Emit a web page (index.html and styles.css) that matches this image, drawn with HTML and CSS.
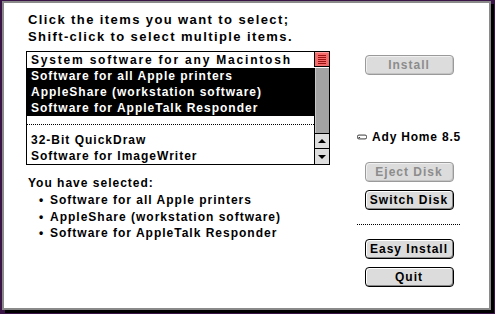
FILE: index.html
```html
<!DOCTYPE html>
<html>
<head>
<meta charset="utf-8">
<link rel="stylesheet" href="styles.css">
</head>
<body>
<div class="window">
  <div class="left">
    <p class="intro">Click the items you want to select;<br>Shift-click to select multiple items.</p>
    <div class="listbox">
      <ul class="items">
        <li>System software for any Macintosh</li>
        <li class="sel">Software for all Apple printers</li>
        <li class="sel">AppleShare (workstation software)</li>
        <li class="sel">Software for AppleTalk Responder</li>
        <li class="sep"></li>
        <li>32-Bit QuickDraw</li>
        <li>Software for ImageWriter</li>
      </ul>
      <div class="scrollbar">
        <div class="thumb">
          <svg width="16" height="16" viewBox="0 0 16 16"><rect x="0.5" y="0.5" width="15" height="15" fill="#f46b6b" stroke="#000"/><rect x="1" y="1" width="14" height="1" fill="#ffa0a0"/><g fill="#9a1010"><rect x="4" y="4" width="8" height="1"/><rect x="4" y="6" width="8" height="1"/><rect x="4" y="8" width="8" height="1"/><rect x="4" y="10" width="8" height="1"/><rect x="4" y="12" width="8" height="1"/></g></svg>
        </div>
        <div class="track"></div>
        <div class="arrow">
          <svg width="16" height="16" viewBox="0 0 16 16"><rect x="0.5" y="0.5" width="15" height="15" fill="#dedede" stroke="#000"/><path d="M4 10 L12 10 L8 6 Z" fill="#000"/></svg>
        </div>
        <div class="arrow">
          <svg width="16" height="16" viewBox="0 0 16 16"><rect x="0.5" y="-0.5" width="15" height="16" fill="#dedede" stroke="#000"/><path d="M4 6 L12 6 L8 10 Z" fill="#000"/></svg>
        </div>
      </div>
    </div>
    <div class="selected">
      <p class="sel-title">You have selected:</p>
      <ul class="bullets">
        <li>Software for all Apple printers</li>
        <li>AppleShare (workstation software)</li>
        <li>Software for AppleTalk Responder</li>
      </ul>
    </div>
  </div>
  <div class="right">
    <button class="btn disabled">Install</button>
    <div class="disk">
      <svg width="13" height="8" viewBox="0 0 13 8"><rect x="0.5" y="1.5" width="12" height="5" rx="2" fill="#fff" stroke="#000"/><rect x="2" y="4" width="2" height="1" fill="#000"/></svg>
      <span>Ady Home 8.5</span>
    </div>
    <button class="btn disabled eject">Eject Disk</button>
    <button class="btn switch">Switch Disk</button>
    <div class="dots"></div>
    <button class="btn easy">Easy Install</button>
    <button class="btn quit">Quit</button>
  </div>
</div>
</body>
</html>
```

FILE: styles.css
```css
html, body {
  margin: 0;
  padding: 0;
}
body {
  width: 495px;
  height: 314px;
  overflow: hidden;
  background: #3a1446;
  font-family: "Liberation Sans", Arial, sans-serif;
  font-weight: bold;
  font-size: 12px;
  letter-spacing: 1px;
  color: #000;
}
.window {
  margin: 1px 0 0 2px;
  width: 485px;
  height: 305px;
  background: #fff;
  border: 2px solid #8a8a8a;
  box-shadow: 3px 3px 0 #000;
  display: flex;
  flex-direction: row;
  gap: 27px;
}
.left {
  width: 304px;
  padding-left: 22px;
  display: flex;
  flex-direction: column;
}
.intro {
  margin: 8px 0 0 2px;
  line-height: 17px;
  font-size: 13px;
  letter-spacing: 1.4px;
  white-space: nowrap;
}
.listbox {
  margin-top: 6px;
  height: 112px;
  border: 1px solid #000;
  display: flex;
}
.items {
  list-style: none;
  margin: 0;
  padding: 0;
  flex: 1;
}
.items li {
  height: 16px;
  line-height: 16px;
  padding-left: 4px;
  white-space: nowrap;
}
.items li:first-child {
  letter-spacing: 1.8px;
}
.items li.sel {
  background: #000;
  color: #fff;
}
.items li.sep {
  position: relative;
}
.items li.sep::after {
  content: "";
  position: absolute;
  left: 0;
  right: 0;
  top: 8px;
  height: 1px;
  background-image: linear-gradient(to right, #000 50%, transparent 50%);
  background-size: 2px 1px;
}
.scrollbar {
  width: 16px;
  display: flex;
  flex-direction: column;
  margin-right: -1px;
  margin-top: -1px;
  margin-bottom: -1px;
}
.scrollbar svg {
  display: block;
}
.thumb {
  height: 17px;
}
.track {
  flex: 1;
  background: #a3a3a3;
  border-left: 1px solid #000;
  border-right: 1px solid #000;
  box-shadow: inset 1px 0 0 #c8c8c8;
}
.arrow {
  height: 16px;
}
.selected {
  margin-top: 10px;
  padding-left: 2px;
}
.sel-title {
  margin: 0;
  line-height: 17px;
}
.bullets {
  margin: 0;
  padding: 0 0 0 11px;
  list-style: none;
}
.bullets li {
  line-height: 16.5px;
  white-space: nowrap;
}
.bullets li::before {
  content: "\2022";
  display: inline-block;
  width: 11px;
}
.right {
  width: 104px;
  display: flex;
  flex-direction: column;
  align-items: center;
  padding-top: 52px;
}
.btn {
  font: inherit;
  letter-spacing: 1px;
  width: 89px;
  height: 20px;
  padding: 0;
  border: 1px solid #000;
  border-radius: 4px;
  background: #dcdcdc;
  color: #000;
  box-shadow: inset 1px 1px 0 #fff, inset -1px -1px 0 #888;
}
.btn.disabled {
  border-color: #9a9a9a;
  color: #8c8c8c;
  box-shadow: inset 1px 1px 0 #f0f0f0, inset -1px -1px 0 #c4c4c4;
}
.disk {
  margin-top: 56px;
  align-self: stretch;
  display: flex;
  align-items: center;
  gap: 5px;
  height: 12px;
  white-space: nowrap;
}
.disk span {
  letter-spacing: 0.8px;
}
.disk svg {
  display: block;
}
.eject {
  margin-top: 19px;
}
.switch {
  margin-top: 8px;
}
.dots {
  margin-top: 14px;
  align-self: stretch;
  height: 1px;
  background-image: linear-gradient(to right, #000 50%, transparent 50%);
  background-size: 2px 1px;
}
.easy {
  margin-top: 14px;
}
.quit {
  margin-top: 8px;
}
```
